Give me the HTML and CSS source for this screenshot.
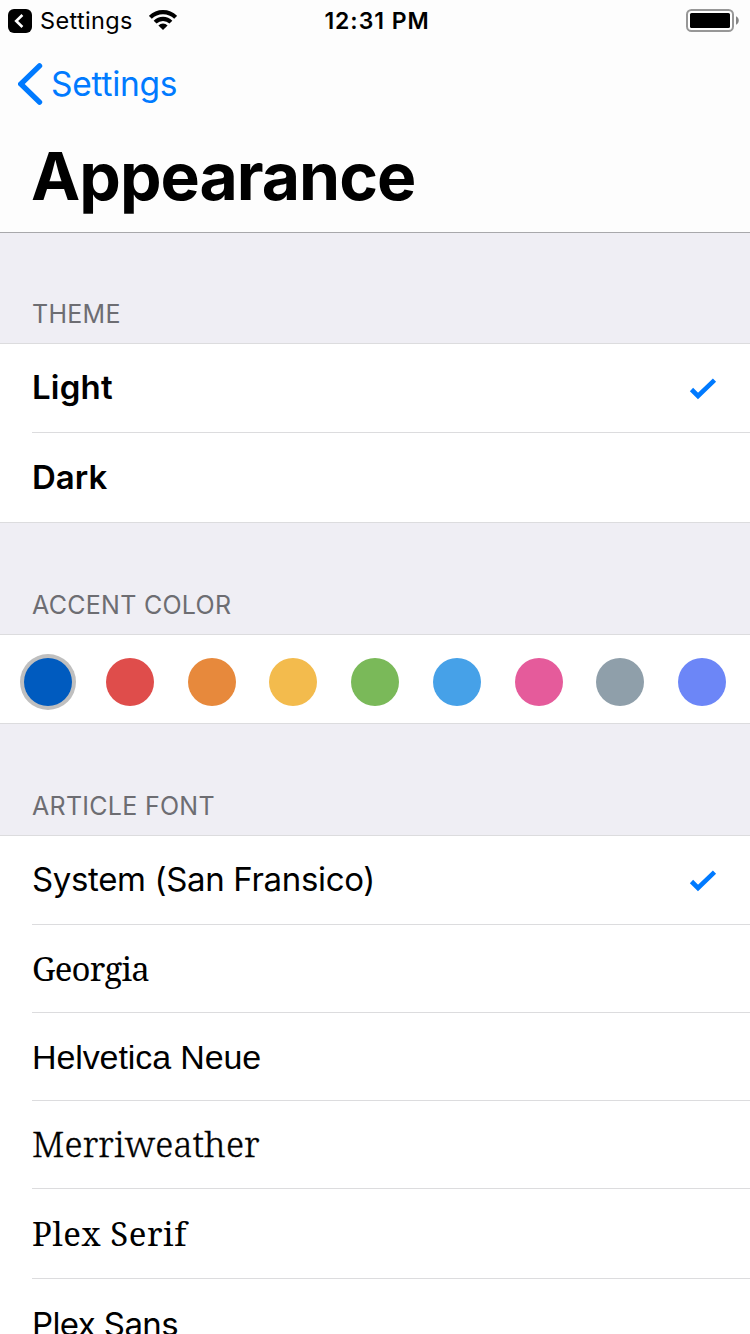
FILE: index.html
```html
<!DOCTYPE html>
<html lang="en">
<head>
<meta charset="utf-8">
<title>Appearance</title>
<link rel="stylesheet" href="styles.css">
</head>
<body>
<div class="screen">
  <header class="header">
    <div class="status">
      <div class="status-left">
        <svg class="return-icon" width="24" height="24" viewBox="0 0 24 24"><rect width="24" height="24" rx="6"/><path d="M14.4 6 8.2 12l6.2 6" fill="none" stroke="#fff" stroke-width="2.6"/></svg>
        <span class="status-app">Settings</span>
        <svg class="wifi" width="28" height="20" viewBox="0 0 28 20"><g fill="none" stroke="#000" stroke-width="4.100"><path d="M1.340 7.340a17.900 17.900 0 0 1 25.320 0"/><path d="M6.100 12.100a11.200 11.200 0 0 1 15.800 0"/></g><path d="M14 20 9.400 15.400a6.500 6.500 0 0 1 9.200 0Z"/></svg>
      </div>
      <span class="clock">12:31 PM</span>
      <svg class="battery" width="53" height="23" viewBox="0 0 53 23"><rect x="1" y="1" width="46" height="21" rx="4.5" fill="#fff" stroke="#979797" stroke-width="2"/><rect x="4" y="4" width="40" height="15" rx="1.6"/><path d="M50 7.3c3.7 1.5 3.7 6.900 0 8.400Z" fill="#858585"/></svg>
    </div>
    <nav class="back">
      <svg width="26" height="42" viewBox="0 0 26 42"><path d="M21.500 2.900 2.800 21l18.700 18.100" fill="none" stroke="#007aff" stroke-width="5.400" stroke-linecap="round" stroke-linejoin="miter"/></svg>
      <a class="back-label">Settings</a>
    </nav>
    <h1 class="title">Appearance</h1>
  </header>

  <section>
    <h2 class="heading heading-first"><span>THEME</span></h2>
    <ul class="group">
      <li class="row semibold"><span class="light">Light</span><svg class="check" width="28" height="22" viewBox="0 0 28 22"><path d="m2.500 11.500 6.500 6.500L25.500 2.200" fill="none" stroke="#007aff" stroke-width="4.600"/></svg></li>
      <li class="row tall semibold"><span>Dark</span></li>
    </ul>
  </section>

  <section>
    <h2 class="heading"><span>ACCENT COLOR</span></h2>
    <div class="swatches">
      <i class="dot navy selected"></i><i class="dot red"></i><i class="dot orange"></i><i class="dot yellow"></i><i class="dot green"></i><i class="dot sky"></i><i class="dot pink"></i><i class="dot slate"></i><i class="dot violet"></i>
    </div>
  </section>

  <section>
    <h2 class="heading"><span>ARTICLE FONT</span></h2>
    <ul class="group fonts">
      <li class="row"><span class="system">System (San Fransico)</span><svg class="check" width="28" height="22" viewBox="0 0 28 22"><path d="m2.500 11.500 6.500 6.500L25.500 2.200" fill="none" stroke="#007aff" stroke-width="4.600"/></svg></li>
      <li class="row short"><span class="georgia">Georgia</span></li>
      <li class="row short"><span class="helvetica">Helvetica Neue</span></li>
      <li class="row short"><span class="merriweather">Merriweather</span></li>
      <li class="row tall"><span class="plex-serif">Plex Serif</span></li>
      <li class="row tall"><span class="plex-sans">Plex Sans</span></li>
    </ul>
  </section>
</div>
</body>
</html>
```
FILE: styles.css
```css
* { box-sizing: border-box; margin: 0; padding: 0; }
body { background: #efeef4; color: #000; font-family: Inter, "Liberation Sans", sans-serif; overflow: hidden; }
.screen { width: 750px; height: 1334px; overflow: hidden; }
svg { display: block; flex: none; }
span, a { white-space: nowrap; }

.header { height: 233px; background: #fdfdfd; border-bottom: 1px solid #a8a8ab; }
.status { height: 40px; display: grid; grid-template-columns: 1fr auto 1fr; align-items: center; padding: 1px 11px 0 8px; }
.status-left { display: flex; align-items: center; }
.status-app { font-size: 23.5px; line-height: 28px; margin-left: 8px; letter-spacing: 0.35px; }
.wifi { margin: -1px 0 0 16px; }
.clock { font-size: 23px; line-height: 28px; font-weight: 600; letter-spacing: 0.95px; padding-left: 7px; }
.battery { justify-self: end; }
.back { display: flex; align-items: center; height: 42px; margin: 23px 0 0 18px; }
.back-label { font-size: 33.5px; line-height: 42px; color: #007aff; margin-left: 7px; letter-spacing: -0.25px; }
.title { font-size: 66px; line-height: 80px; font-weight: 700; padding-left: 31px; margin-top: 31px; letter-spacing: -1px; }

.heading { height: 111px; padding: 66px 0 0 32px; font-size: 25px; font-weight: 400; line-height: 32px; color: #6d6d72; letter-spacing: 0.28px; }
.heading-first { height: 110px; padding-top: 65px; }
.group { list-style: none; background: #fff; border-top: 1px solid #dcdcde; border-bottom: 1px solid #dcdcde; }
.row { height: 89px; margin-left: 32px; padding: 0 33px 2px 0; display: flex; align-items: center; justify-content: space-between; font-size: 33px; line-height: 44px; border-bottom: 1px solid #dcdcde; }
.row:last-child { border-bottom: 0; }
.short { height: 88px; }
.tall { height: 90px; }
.group:not(.fonts) .tall { height: 89px; }
.semibold { font-weight: 600; }
.check { margin-top: 4px; }

.swatches { height: 90px; background: #fff; border: solid #dcdcde; border-width: 1px 0; display: flex; justify-content: space-between; align-items: center; padding: 5px 24px 0; }
.dot { width: 48px; height: 48px; border-radius: 50%; }
.selected { box-shadow: 0 0 0 4px #bfbfbf; }
.navy { background: #005bbf; }
.red { background: #df4d4b; }
.orange { background: #e7893c; }
.yellow { background: #f3bb4d; }
.green { background: #7ab959; }
.sky { background: #46a1e8; }
.pink { background: #e55b9b; }
.slate { background: #8f9faa; }
.violet { background: #6c86f7; }

.light { letter-spacing: 0.2px; }
.system { letter-spacing: -0.35px; }
.georgia { font-family: "Noto Serif", "Liberation Serif", serif; font-size: 33px; letter-spacing: -0.8px; padding-top: 2px; }
.helvetica { font-family: "Liberation Sans", Arial, sans-serif; font-size: 34px; letter-spacing: -0.1px; padding-top: 2px; }
.merriweather { font-family: "Noto Serif", "Liberation Serif", serif; font-weight: 300; font-size: 35px; letter-spacing: 0.2px; -webkit-text-stroke: 0.4px #000; }
.plex-serif { font-family: "Noto Serif", "Liberation Serif", serif; font-size: 33px; letter-spacing: 0.55px; padding-top: 2px; }
.plex-sans { letter-spacing: -0.6px; padding-top: 2px; }
```
